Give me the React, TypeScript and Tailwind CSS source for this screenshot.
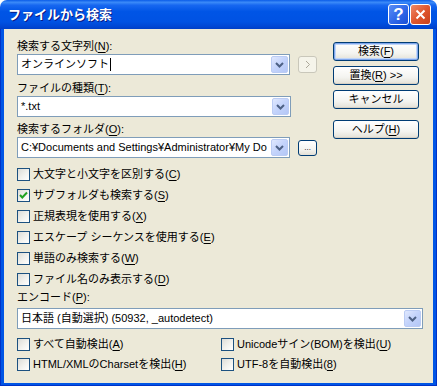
import React from "react"

const font = "font-['Liberation_Sans','Noto_Sans_CJK_JP',sans-serif]"

function Acc({ pre, k, post = "" }: { pre: string; k: string; post?: string }) {
  return (
    <span className="whitespace-nowrap">
      {pre}(<span className="underline underline-offset-[2px]">{k}</span>){post}
    </span>
  )
}

function Chevron() {
  return (
    <svg width="9" height="6" viewBox="0 0 9 6">
      <polyline points="1,1 4.5,4.5 8,1" fill="none" stroke="#4D6185" strokeWidth="2" />
    </svg>
  )
}

function Combo({ width, children }: { width: string; children: React.ReactNode }) {
  return (
    <div className={`${width} h-[21px] flex border border-[#7F9DB9] bg-white p-[1px]`}>
      <div className="flex-1 min-w-0 flex items-center pl-[2px] overflow-hidden whitespace-nowrap text-[11px] text-black">
        {children}
      </div>
      <div className="w-[17px] h-full flex items-center justify-center rounded-[2px] border border-[#BBCCF4] bg-[linear-gradient(135deg,#E0E8FE_0%,#C3D3FB_50%,#B4C7F6_100%)]">
        <Chevron />
      </div>
    </div>
  )
}

function Check({ checked = false, children }: { checked?: boolean; children: React.ReactNode }) {
  return (
    <div className="flex items-center gap-[3px]">
      <div className="w-[13px] h-[13px] border border-[#1C5180] bg-[linear-gradient(135deg,#DCDCD7_0%,#F2F2EE_55%,#FFFFFF_100%)] flex items-center justify-center">
        {checked && (
          <svg width="11" height="11" viewBox="0 0 11 11">
            <polyline points="2,5 4.3,7.5 9,2.5" fill="none" stroke="#21A121" strokeWidth="2" />
          </svg>
        )}
      </div>
      <span className="text-[11px] leading-[15px] text-black">{children}</span>
    </div>
  )
}

function Btn({ children, def = false }: { children: React.ReactNode; def?: boolean }) {
  return (
    <div
      className={`h-[19px] flex items-center justify-center rounded-[3px] border border-[#003C74] bg-[linear-gradient(180deg,#FFFFFF_0%,#F4F4F0_60%,#E3E0D6_100%)] text-[11px] text-black ${
        def ? "shadow-[inset_0_0_0_1px_#7FA6EC,inset_0_0_0_2px_#C0D6F8]" : "shadow-[inset_0_-1px_0_#D6D0C5]"
      }`}
    >
      {children}
    </div>
  )
}

export default function App() {
  return (
    <div className={`w-[437px] h-[386px] flex flex-col ${font}`}>
      {/* title bar */}
      <div className="h-[29px] rounded-t-[7px] flex items-center pl-[8px] pr-[6px] bg-[linear-gradient(180deg,#0A5CE8_0%,#3B8AF8_8%,#1767F0_18%,#0055E6_40%,#0052E3_75%,#0046D3_92%,#003FC6_100%)]">
        <span className="text-[13px] font-bold text-white [text-shadow:1px_1px_0_#0A1883]">ファイルから検索</span>
        <div className="ml-auto flex gap-[1px]">
          <div className="w-[21px] h-[21px] rounded-[3px] border border-white flex items-center justify-center bg-[linear-gradient(135deg,#5A8DF5_0%,#2F67E8_55%,#1A4FD6_100%)]">
            <span className="text-white font-bold text-[17px] leading-none font-['Liberation_Sans',sans-serif]">?</span>
          </div>
          <div className="w-[21px] h-[21px] rounded-[3px] border border-white flex items-center justify-center bg-[linear-gradient(135deg,#EE8A6A_0%,#E0572E_50%,#C8401C_100%)]">
            <svg width="11" height="11" viewBox="0 0 11 11">
              <path d="M1.5 1.5 L9.5 9.5 M9.5 1.5 L1.5 9.5" stroke="white" strokeWidth="2" />
            </svg>
          </div>
        </div>
      </div>

      {/* frame */}
      <div className="flex-1 flex bg-[#0055E5] px-[4px] pb-[3px] shadow-[inset_1px_0_0_#0032C8,inset_-1px_0_0_#0032C8,inset_0_-1px_0_#0032C8]">
        <div className="flex-1 flex flex-col bg-[#ECE9D8] pl-[13px] pr-[10px] pt-[10px] text-[11px] text-black">
          <div className="flex gap-[16px]">
            <div className="w-[300px] flex flex-col">
              <div className="leading-[15px]"><Acc pre="検索する文字列" k="N" post=":" /></div>
              <div className="flex items-center gap-[8px]">
                <Combo width="w-[274px]">
                  オンラインソフト<span className="inline-block w-px h-[13px] bg-black ml-[1px]" />
                </Combo>
                <div className="w-[19px] h-[17px] rounded-[3px] border border-[#C9C7BA] bg-[#F5F4EA] flex items-center justify-center">
                  <svg width="6" height="9" viewBox="0 0 6 9">
                    <polyline points="1,1 4.5,4.5 1,8" fill="none" stroke="#ACA899" strokeWidth="1" />
                  </svg>
                </div>
              </div>

              <div className="leading-[15px] mt-[6px]"><Acc pre="ファイルの種類" k="T" post=":" /></div>
              <Combo width="w-[274px]">*.txt</Combo>

              <div className="leading-[15px] mt-[5px]"><Acc pre="検索するフォルダ" k="O" post=":" /></div>
              <div className="flex items-center gap-[8px]">
                <Combo width="w-[274px]">C:¥Documents and Settings¥Administrator¥My Do</Combo>
                <div className="w-[19px] h-[16px] rounded-[3px] border border-[#003C74] bg-[linear-gradient(180deg,#FFFFFF_0%,#F4F4F0_60%,#E3E0D6_100%)] flex items-end justify-center pb-[3px]">
                  <span className="text-[8px] leading-none">...</span>
                </div>
              </div>
            </div>

            <div className="w-[86px] flex flex-col pt-[3px]">
              <Btn def>
                <Acc pre="検索" k="F" />
              </Btn>
              <div className="mt-[5px]">
                <Btn>
                  <Acc pre="置換" k="R" post=" >>" />
                </Btn>
              </div>
              <div className="mt-[5px]">
                <Btn>キャンセル</Btn>
              </div>
              <div className="mt-[11px]">
                <Btn>
                  <Acc pre="ヘルプ" k="H" />
                </Btn>
              </div>
            </div>
          </div>

          <div className="flex flex-col mt-[6px]">
            {[
              { pre: "大文字と小文字を区別する", k: "C", c: false },
              { pre: "サブフォルダも検索する", k: "S", c: true },
              { pre: "正規表現を使用する", k: "X", c: false },
              { pre: "エスケープ シーケンスを使用する", k: "E", c: false },
              { pre: "単語のみ検索する", k: "W", c: false },
              { pre: "ファイル名のみ表示する", k: "D", c: false },
            ].map((r) => (
              <div key={r.k} className="h-[21px] flex items-center">
                <Check checked={r.c}>
                  <Acc pre={r.pre} k={r.k} />
                </Check>
              </div>
            ))}
          </div>

          <div className="leading-[15px]"><Acc pre="エンコード" k="P" post=":" /></div>
          <div className="mt-[3px]">
            <Combo width="w-[406px]">日本語 (自動選択) (50932, _autodetect)</Combo>
          </div>

          <div className="grid grid-cols-[204px_1fr] mt-[5px]">
            <div className="h-[20px] flex items-center">
              <Check><Acc pre="すべて自動検出" k="A" /></Check>
            </div>
            <div className="h-[20px] flex items-center">
              <Check><Acc pre="Unicodeサイン(BOM)を検出" k="U" /></Check>
            </div>
            <div className="h-[20px] flex items-center">
              <Check><Acc pre="HTML/XMLのCharsetを検出" k="H" /></Check>
            </div>
            <div className="h-[20px] flex items-center">
              <Check><Acc pre="UTF-8を自動検出" k="8" /></Check>
            </div>
          </div>
        </div>
      </div>
    </div>
  )
}
